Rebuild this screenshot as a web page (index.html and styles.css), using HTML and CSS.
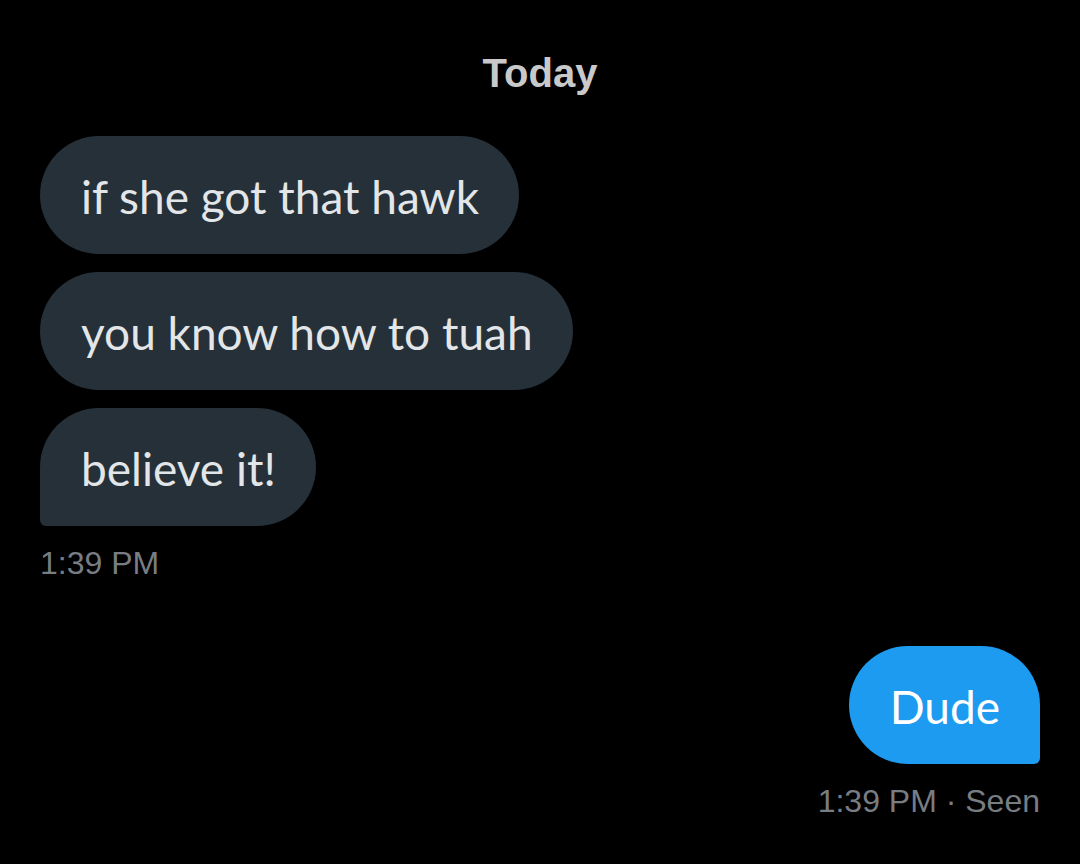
FILE: index.html
```html
<!DOCTYPE html>
<html>
<head>
<meta charset="utf-8">
<link rel="stylesheet" href="styles.css">
</head>
<body>
<main class="chat">
  <div class="day">Today</div>
  <div class="group in">
    <div class="bubble">if she got that hawk</div>
    <div class="bubble">you know how to tuah</div>
    <div class="bubble last">believe it!</div>
    <div class="meta">1:39 PM</div>
  </div>
  <div class="group out">
    <div class="bubble last">Dude</div>
    <div class="meta">1:39 PM · Seen</div>
  </div>
</main>
</body>
</html>
```
FILE: styles.css
```css
html, body {
  margin: 0;
  padding: 0;
  background: #000;
}
.chat {
  display: flex;
  flex-direction: column;
  padding: 46px 40px 0 40px;
  width: 1080px;
  box-sizing: border-box;
}
.day {
  text-align: center;
  font-family: "Liberation Sans", Arial, sans-serif;
  font-weight: 700;
  font-size: 40px;
  line-height: 54px;
  color: #c9c9c9;
  margin-bottom: 36px;
}
.group {
  display: flex;
  flex-direction: column;
  gap: 18px;
}
.group.in { align-items: flex-start; }
.group.out { align-items: flex-end; margin-top: 63px; }
.bubble {
  height: 118px;
  box-sizing: border-box;
  padding: 3px 40px 0 41px;
  display: flex;
  align-items: center;
  border-radius: 59px;
  background: #253038;
  color: #e3e6e8;
  font-family: Lato, "Noto Sans", sans-serif;
  font-size: 46px;
}
.in .bubble.last { border-bottom-left-radius: 6px; }
.out .bubble {
  background: #1d9bf0;
  color: #fff;
}
.out .bubble.last { border-bottom-right-radius: 6px; }
.meta {
  font-family: "Liberation Sans", Arial, sans-serif;
  font-size: 32px;
  line-height: 40px;
  color: #787d83;
  margin-top: -1px;
}
```
